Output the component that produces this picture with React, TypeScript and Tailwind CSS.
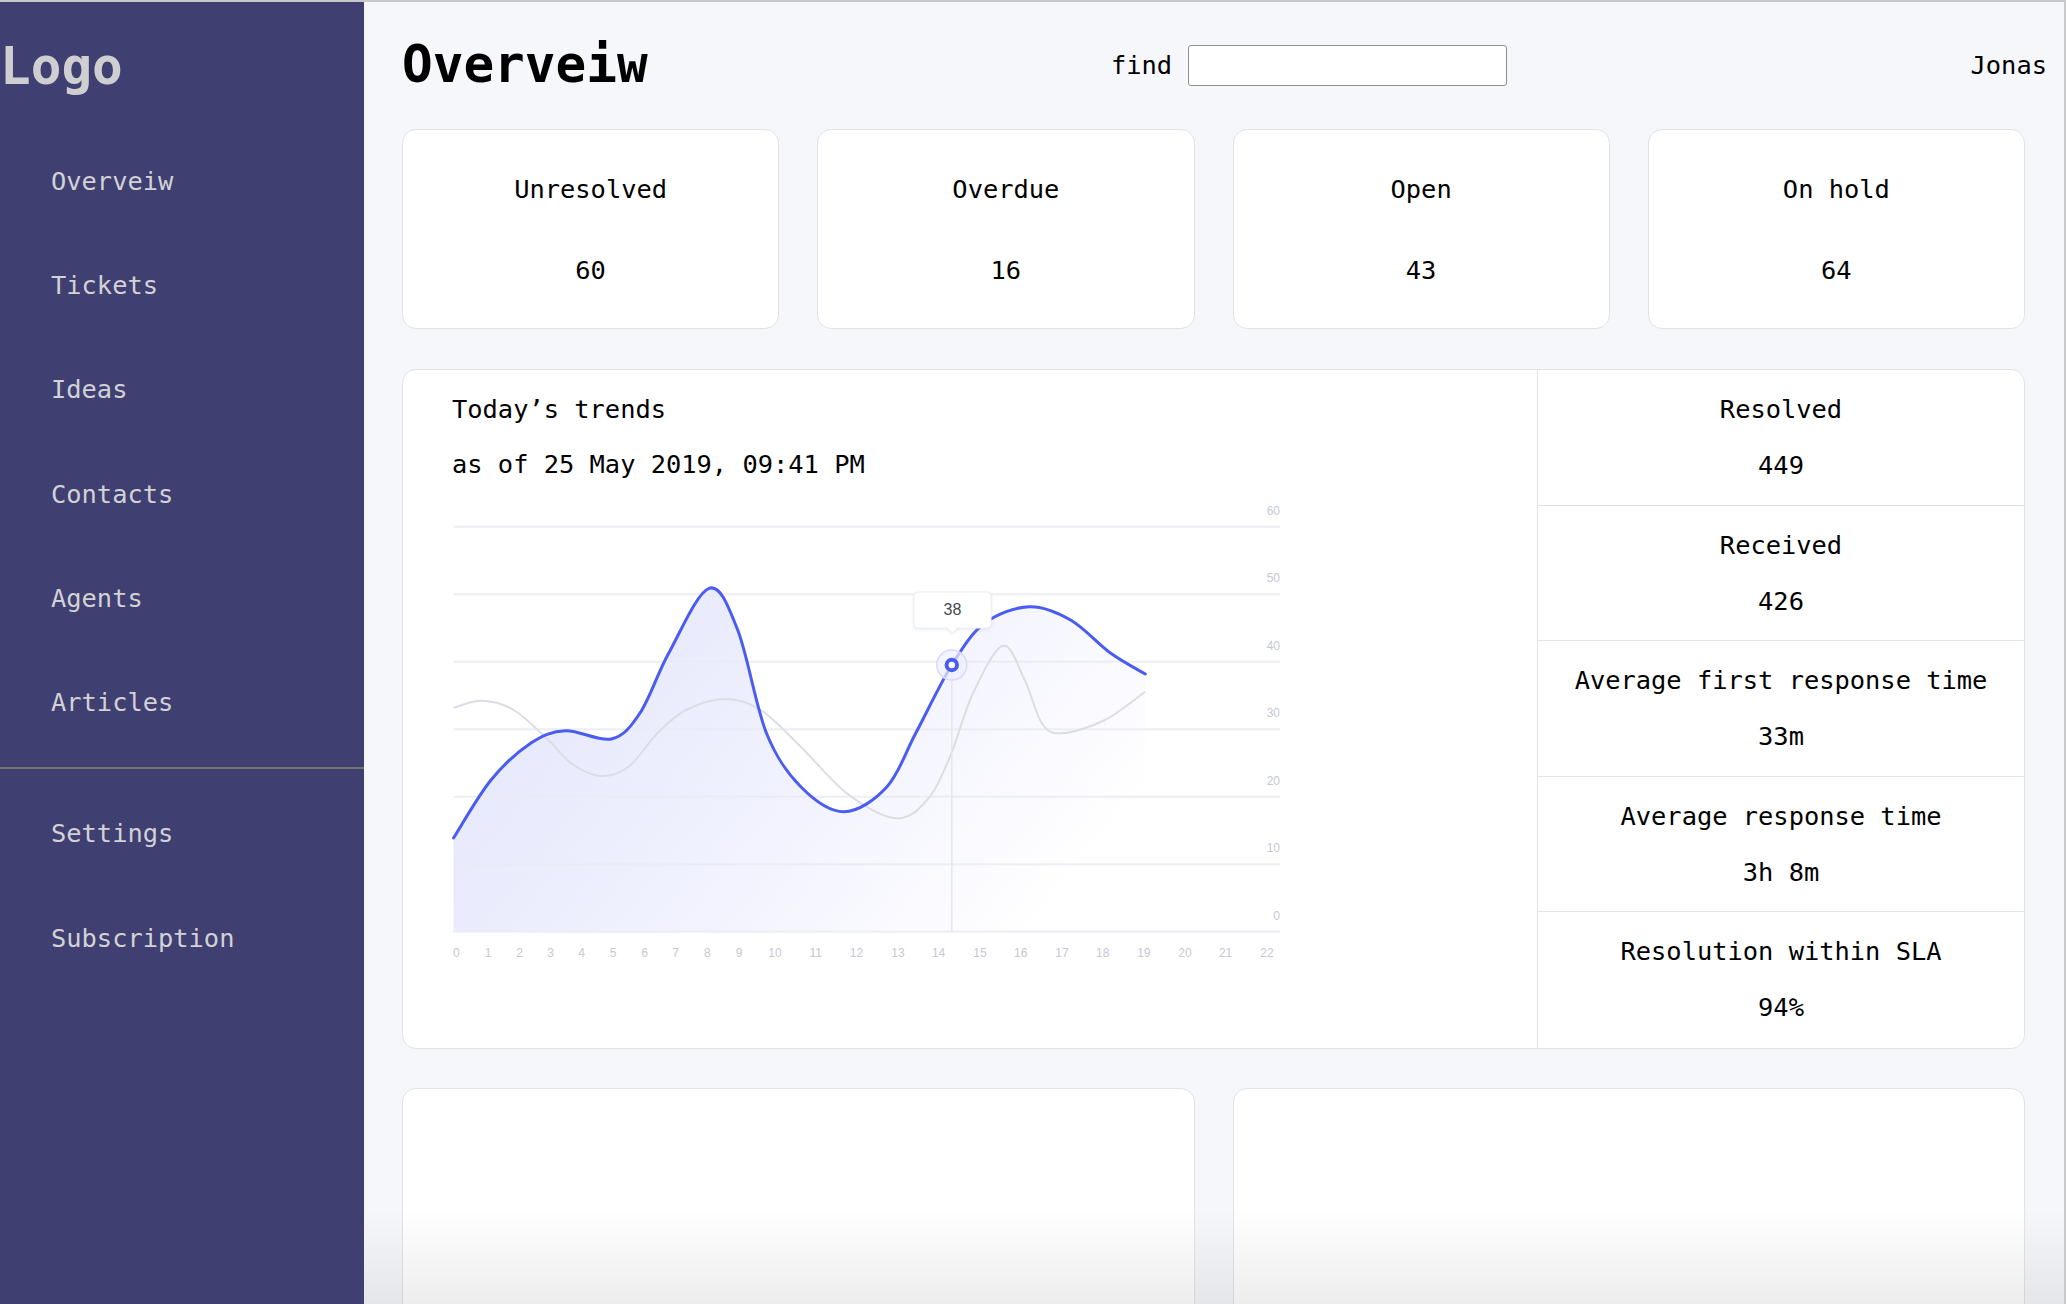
const navTop = ['Overveiw', 'Tickets', 'Ideas', 'Contacts', 'Agents', 'Articles'];
const navBottom = ['Settings', 'Subscription'];

const stats = [
  { label: 'Unresolved', value: '60' },
  { label: 'Overdue', value: '16' },
  { label: 'Open', value: '43' },
  { label: 'On hold', value: '64' },
];

const summary = [
  { label: 'Resolved', value: '449' },
  { label: 'Received', value: '426' },
  { label: 'Average first response time', value: '33m' },
  { label: 'Average response time', value: '3h 8m' },
  { label: 'Resolution within SLA', value: '94%' },
];

type Pt = [number, number];

const bluePts: Pt[] = [
  [2.5, 338], [40, 280], [80, 243], [114.5, 230.7], [160.4, 239], [189, 213],
  [217.8, 153], [258, 88.3], [286.7, 130], [315.4, 233], [349.8, 286.7],
  [392.9, 311.7], [436, 286.7], [464.7, 233.3], [500.8, 165], [533.5, 123.3],
  [578.3, 106.7], [619.6, 120], [659.8, 153.3], [694.3, 174],
];

const greyPts: Pt[] = [
  [2.5, 207.7], [31.2, 200.7], [62.8, 210], [97.3, 240], [120.2, 263.3],
  [148.9, 276], [177.6, 266.7], [206.3, 233.3], [235, 210], [274, 199],
  [309.7, 210], [349.8, 246.7], [395.8, 293.3], [444.6, 318.3], [476.1, 300],
  [499, 256.7], [522, 193.3], [551.9, 145.7], [573.7, 180], [590.9, 223.3],
  [611, 233.3], [654, 220], [694.3, 191.7],
];

// catmull-rom through the traced points
const smooth = (pts: Pt[]) => {
  let d = `M${pts[0][0]},${pts[0][1]}`;
  for (let i = 0; i < pts.length - 1; i++) {
    const p0 = pts[i - 1] || pts[i];
    const p1 = pts[i];
    const p2 = pts[i + 1];
    const p3 = pts[i + 2] || p2;
    const c1x = p1[0] + (p2[0] - p0[0]) / 6;
    const c1y = p1[1] + (p2[1] - p0[1]) / 6;
    const c2x = p2[0] - (p3[0] - p1[0]) / 6;
    const c2y = p2[1] - (p3[1] - p1[1]) / 6;
    d += ` C${c1x.toFixed(1)},${c1y.toFixed(1)} ${c2x.toFixed(1)},${c2y.toFixed(1)} ${p2[0]},${p2[1]}`;
  }
  return d;
};

const gridY = [26.7, 94.2, 161.7, 229.2, 296.7, 364.2, 431.7];
const yLabels = ['60', '50', '40', '30', '20', '10', '0'];
const xLabelPos = [
  5.4, 37, 68.5, 99.5, 130.5, 162, 193.7, 224.7, 256.3, 288, 324, 364.8, 405.5,
  447, 487.6, 529, 569.7, 611, 651.8, 693, 734, 774.6, 816,
];

const TrendChart = () => {
  const blue = smooth(bluePts);
  const grey = smooth(greyPts);
  return (
    <svg width="836" height="470" viewBox="0 0 836 470" className="block -ml-px">
      <defs>
        <linearGradient id="area" x1="0" y1="0.2" x2="1" y2="0.6">
          <stop offset="0" stopColor="#e3e6fc" />
          <stop offset="0.55" stopColor="#f1f2fe" />
          <stop offset="1" stopColor="#ffffff" />
        </linearGradient>
        <filter id="tip" x="-20%" y="-20%" width="140%" height="150%">
          <feDropShadow dx="0" dy="1" stdDeviation="1.5" floodColor="#9aa0b8" floodOpacity="0.25" />
        </filter>
      </defs>
      <path d={`${blue} L694.3,431.7 L2.5,431.7 Z`} fill="url(#area)" />
      {gridY.map((y, i) => (
        <g key={y}>
          <line x1="2.5" x2="829" y1={y} y2={y} stroke="#e9ebf1" strokeOpacity="0.85" strokeWidth="2" />
          <text
            x="829"
            y={y - 15}
            textAnchor="end"
            dominantBaseline="middle"
            fontSize="12"
            fill="#c5c8d2"
            fontFamily="'Liberation Sans', sans-serif"
          >
            {yLabels[i]}
          </text>
        </g>
      ))}
      <path d={grey} fill="none" stroke="#dcdce6" strokeWidth="2" />
      <line x1="500.8" x2="500.8" y1="165" y2="431.7" stroke="#e4e6ee" strokeWidth="1.5" />
      <path d={blue} fill="none" stroke="#4a5cf2" strokeWidth="3" strokeLinecap="round" />
      <circle cx="500.8" cy="165" r="15" fill="#eef0fe" fillOpacity="0.7" stroke="#d6dbfc" strokeWidth="1.5" />
      <circle cx="500.8" cy="165" r="5.2" fill="#fff" stroke="#4a5cf2" strokeWidth="4" />
      <g filter="url(#tip)">
        <path
          d="M467,92 H536 a4,4 0 0 1 4,4 V124 a4,4 0 0 1 -4,4 H506.5 L501.5,133 L496.5,128 H467 a4,4 0 0 1 -4,-4 V96 a4,4 0 0 1 4,-4 Z"
          fill="#fff"
          stroke="#eceef3"
        />
      </g>
      <text
        x="501.5"
        y="111"
        textAnchor="middle"
        dominantBaseline="middle"
        fontSize="16"
        fill="#454852"
        fontFamily="'Liberation Sans', sans-serif"
      >
        38
      </text>
      {xLabelPos.map((x, i) => (
        <text
          key={i}
          x={x}
          y="454"
          textAnchor="middle"
          dominantBaseline="middle"
          fontSize="12"
          fill="#c5c8d2"
          fontFamily="'Liberation Sans', sans-serif"
        >
          {i}
        </text>
      ))}
    </svg>
  );
};

export default function App() {
  return (
    <div className="relative flex h-[1304px] w-[2066px] overflow-hidden border-t-2 border-r-2 border-[#c9c9cb] font-['DejaVu_Sans_Mono',monospace] text-black">
      <aside className="flex w-[364px] shrink-0 flex-col bg-[#3f3f71] text-[#d2d2d6]">
        <div className="h-[126.5px] pt-[35px] text-[51px] font-bold leading-[60px] text-[#cfcfd2]">Logo</div>
        {navTop.map((item) => (
          <div key={item} className="flex h-[104.3px] items-center pl-[51px] text-[25.4px] leading-[30px]">
            {item}
          </div>
        ))}
        <div className="mt-[13px] border-t-2 border-[#727268]" />
        <div className="mt-[12px]">
          {navBottom.map((item) => (
            <div key={item} className="flex h-[104.3px] items-center pl-[51px] text-[25.4px] leading-[30px]">
              {item}
            </div>
          ))}
        </div>
      </aside>

      <main className="relative flex-1 bg-[#f6f7fb] pl-[38px] pt-[33px]">
        <header className="flex h-[60px] items-center justify-between pr-[17px]">
          <h1 className="text-[51px] font-bold leading-[60px]">Overveiw</h1>
          <div className="flex items-center">
            <span className="text-[25.4px] leading-[30px]">find</span>
            <input className="ml-[16px] h-[41px] w-[319px] rounded-[3px] border border-[#8e8e98] bg-white" />
          </div>
          <span className="text-[25.4px] leading-[30px]">Jonas</span>
        </header>

        <div className="pr-[39px]">
          <div className="mt-[34px] grid grid-cols-4 gap-[38px]">
            {stats.map((s) => (
              <div
                key={s.label}
                className="flex h-[200px] flex-col items-center gap-[51px] rounded-[14px] border border-[#e1e2ea] bg-white pt-[44px] text-[25.4px] leading-[30px]"
              >
                <p>{s.label}</p>
                <p>{s.value}</p>
              </div>
            ))}
          </div>

          <section className="mt-[40px] flex h-[680px] overflow-hidden rounded-[14px] border border-[#e1e2ea] bg-white">
            <div className="flex-1 pl-[49px] pt-[24px]">
              <p className="text-[25.4px] leading-[30px]">Today’s trends</p>
              <p className="mt-[25px] text-[25.4px] leading-[30px]">as of 25 May 2019, 09:41 PM</p>
              <div className="mt-[21px]">
                <TrendChart />
              </div>
            </div>
            <div className="grid w-[487px] grid-rows-5 border-l border-[#e1e2ea]">
              {summary.map((row, i) => (
                <div
                  key={row.label}
                  className={`flex flex-col items-center gap-[26px] pt-[24px] text-[25.4px] leading-[30px] ${
                    i < summary.length - 1 ? 'border-b border-[#e1e2ea]' : ''
                  }`}
                >
                  <p>{row.label}</p>
                  <p>{row.value}</p>
                </div>
              ))}
            </div>
          </section>

          <div className="mt-[39px] grid grid-cols-2 gap-[38px]">
            <div className="h-[320px] rounded-[14px] border border-[#e1e2ea] bg-white" />
            <div className="h-[320px] rounded-[14px] border border-[#e1e2ea] bg-white" />
          </div>
        </div>

        <div className="pointer-events-none absolute bottom-0 left-0 right-0 h-[95px] bg-gradient-to-b from-transparent to-black/[0.07]" />
      </main>
    </div>
  );
}
